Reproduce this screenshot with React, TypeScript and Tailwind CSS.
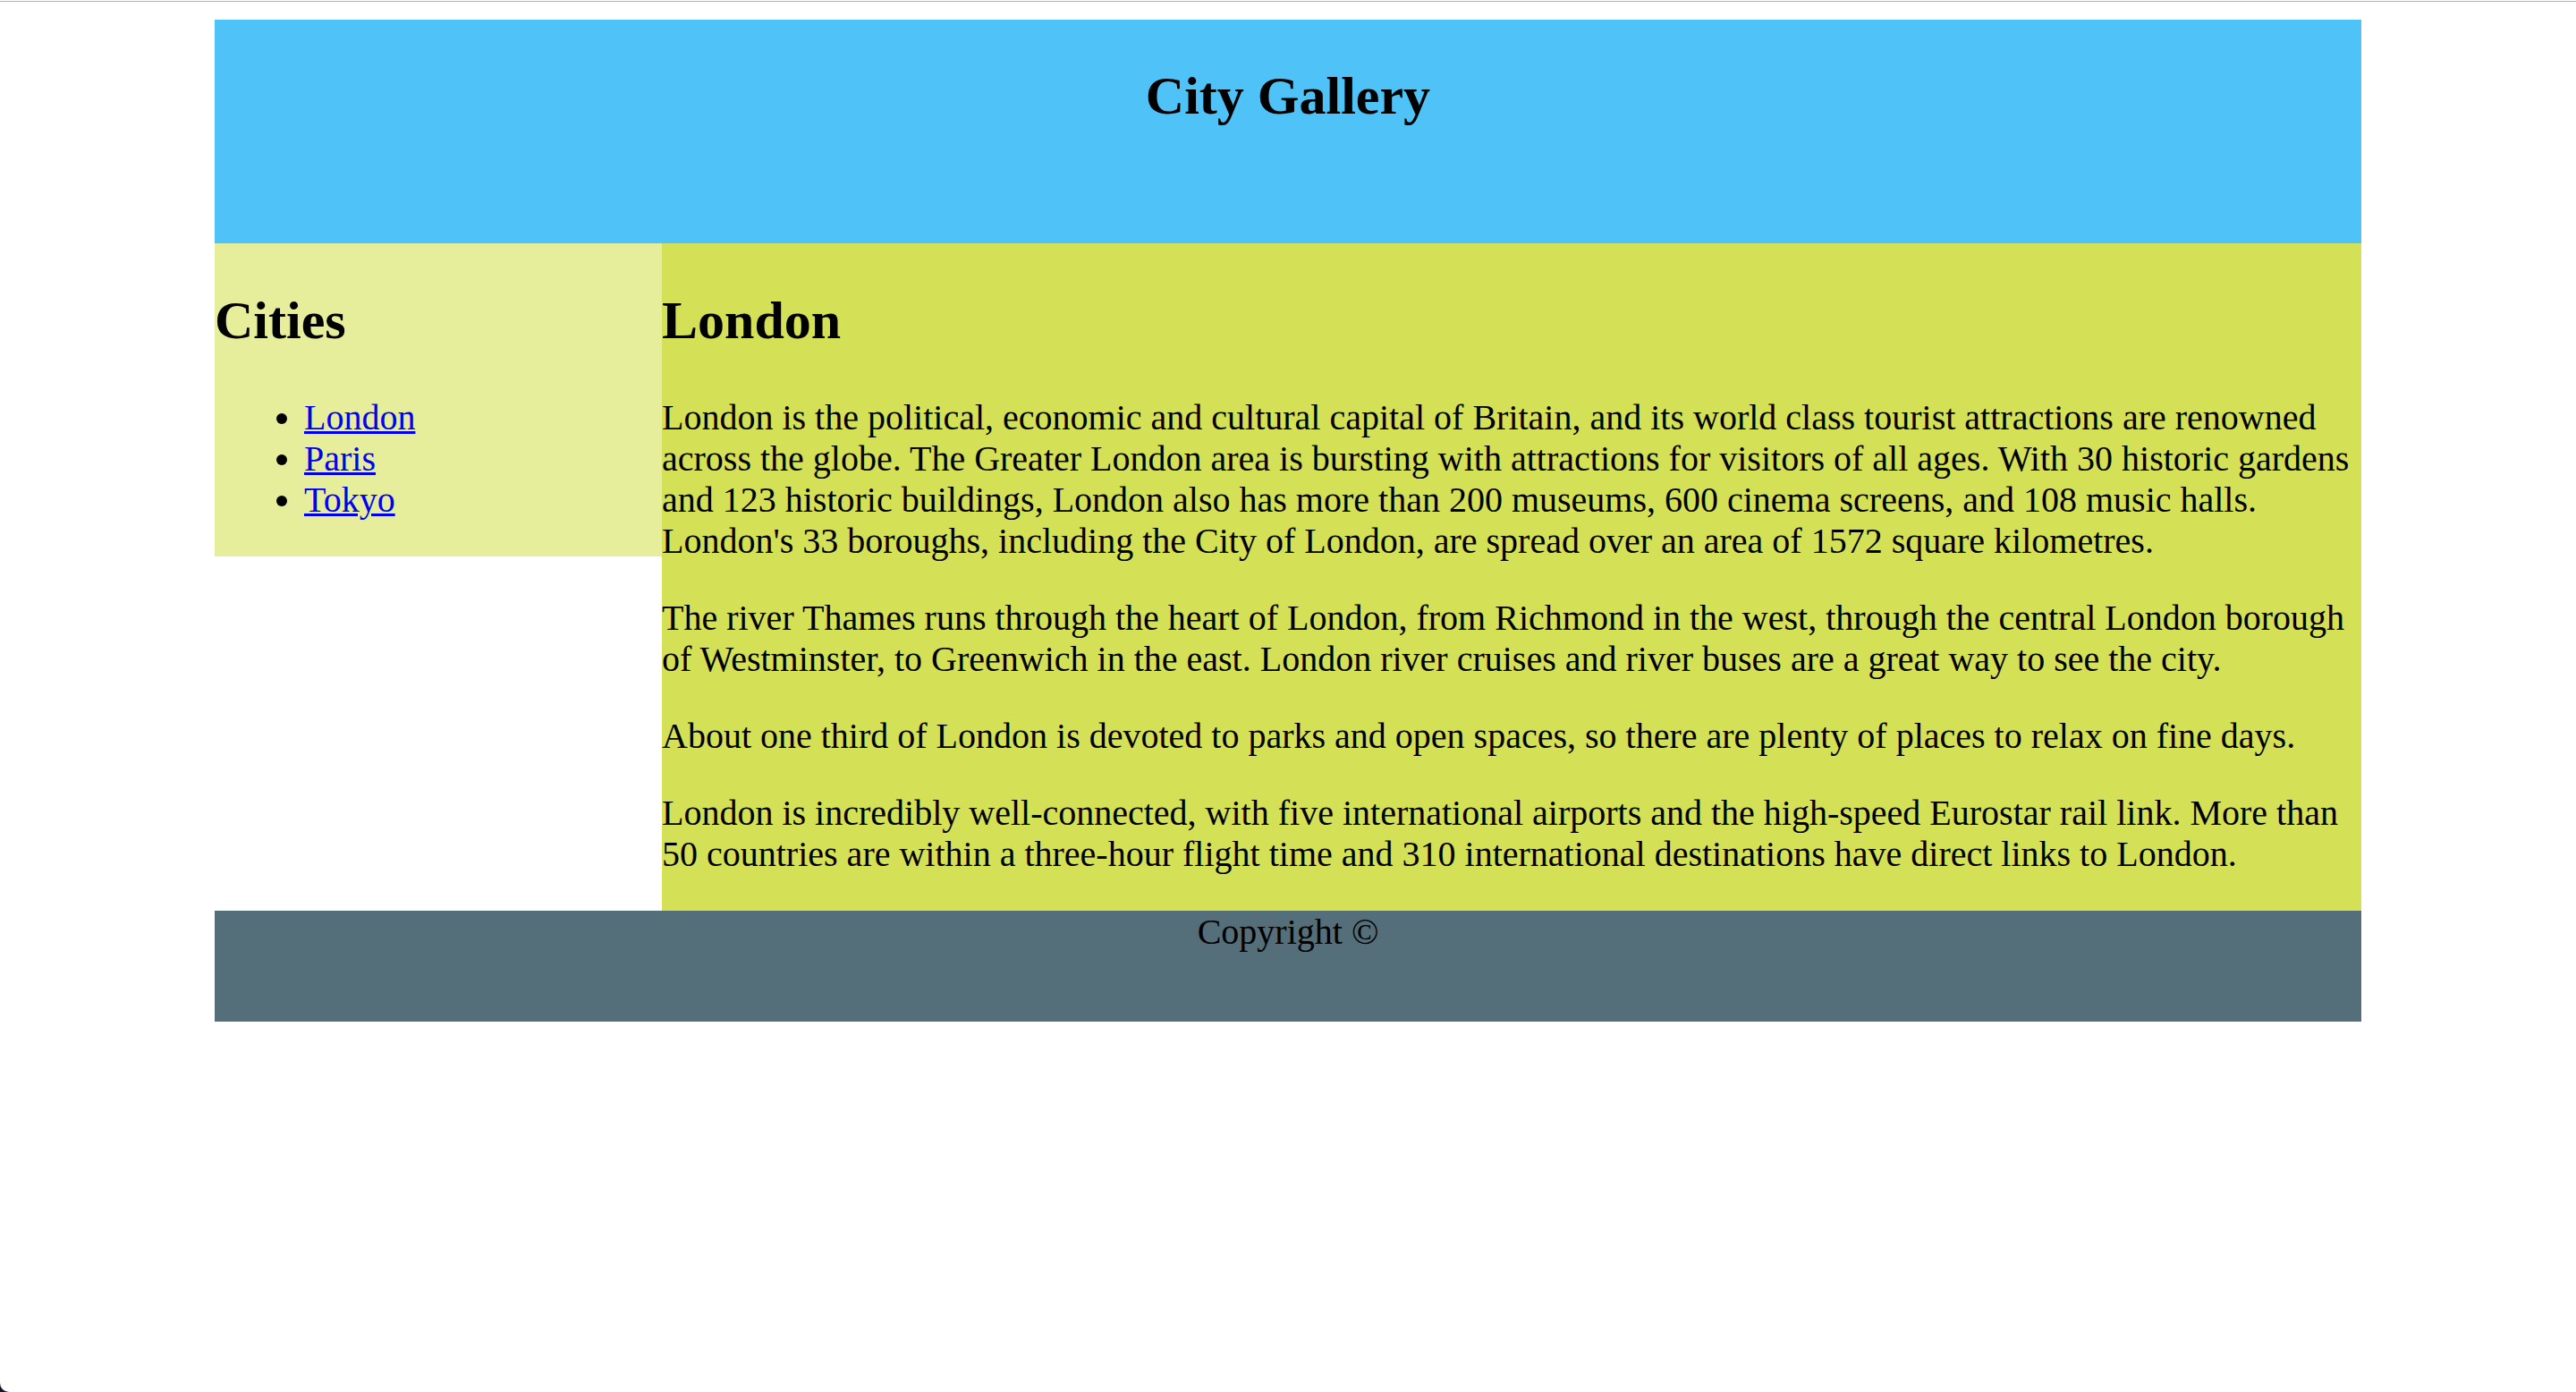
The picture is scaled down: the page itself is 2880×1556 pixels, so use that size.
import React from "react";

export default function App() {
  return (
    <div className="relative min-h-screen bg-white font-['Liberation_Serif','Times_New_Roman',serif] text-black">
      <div className="pt-px">
        <div className="h-px bg-[#b3b3b3]" />
      </div>
      <div className="mx-auto mt-[20px] w-[2400px]">
        <header className="h-[250px] bg-[#4fc3f7] pt-[51px]">
          <h1 className="text-center text-[60px] font-bold leading-[69px]">City Gallery</h1>
        </header>
        <div className="flex items-start">
          <nav className="w-[500px] shrink-0 bg-[#e6ee9c] pt-[52px] pb-[40px]">
            <h2 className="text-[60px] font-bold leading-[69px]">Cities</h2>
            <ul className="mt-[51px] list-disc pl-[100px] text-[40px] leading-[46px]">
              <li>
                <a href="#" className="text-[#0000ee] underline decoration-[3px]">London</a>
              </li>
              <li>
                <a href="#" className="text-[#0000ee] underline decoration-[3px]">Paris</a>
              </li>
              <li>
                <a href="#" className="text-[#0000ee] underline decoration-[3px]">Tokyo</a>
              </li>
            </ul>
          </nav>
          <article className="min-w-0 flex-1 bg-[#d4e157] pt-[52px] pb-[40px] text-[40px] leading-[46px]">
            <h2 className="text-[60px] font-bold leading-[69px]">London</h2>
            <p className="mt-[51px]">
              London is the political, economic and cultural capital of Britain, and its world class tourist attractions are renowned across the globe. The Greater London area is bursting with attractions for visitors of all ages. With 30 historic gardens and 123 historic buildings, London also has more than 200 museums, 600 cinema screens, and 108 music halls. London's 33 boroughs, including the City of London, are spread over an area of 1572 square kilometres.
            </p>
            <p className="mt-[40px]">
              The river Thames runs through the heart of London, from Richmond in the west, through the central London borough of Westminster, to Greenwich in the east. London river cruises and river buses are a great way to see the city.
            </p>
            <p className="mt-[40px]">
              About one third of London is devoted to parks and open spaces, so there are plenty of places to relax on fine days.
            </p>
            <p className="mt-[40px]">
              London is incredibly well-connected, with five international airports and the high-speed Eurostar rail link. More than 50 countries are within a three-hour flight time and 310 international destinations have direct links to London.
            </p>
          </article>
        </div>
        <footer className="h-[124px] bg-[#546e7a] pt-px text-center text-[40px] leading-[46px]">Copyright ©</footer>
      </div>
      <div className="absolute bottom-0 left-0 h-[10px] w-[10px] bg-[#111827]">
        <div className="h-full w-full rounded-bl-[10px] bg-white" />
      </div>
    </div>
  );
}
